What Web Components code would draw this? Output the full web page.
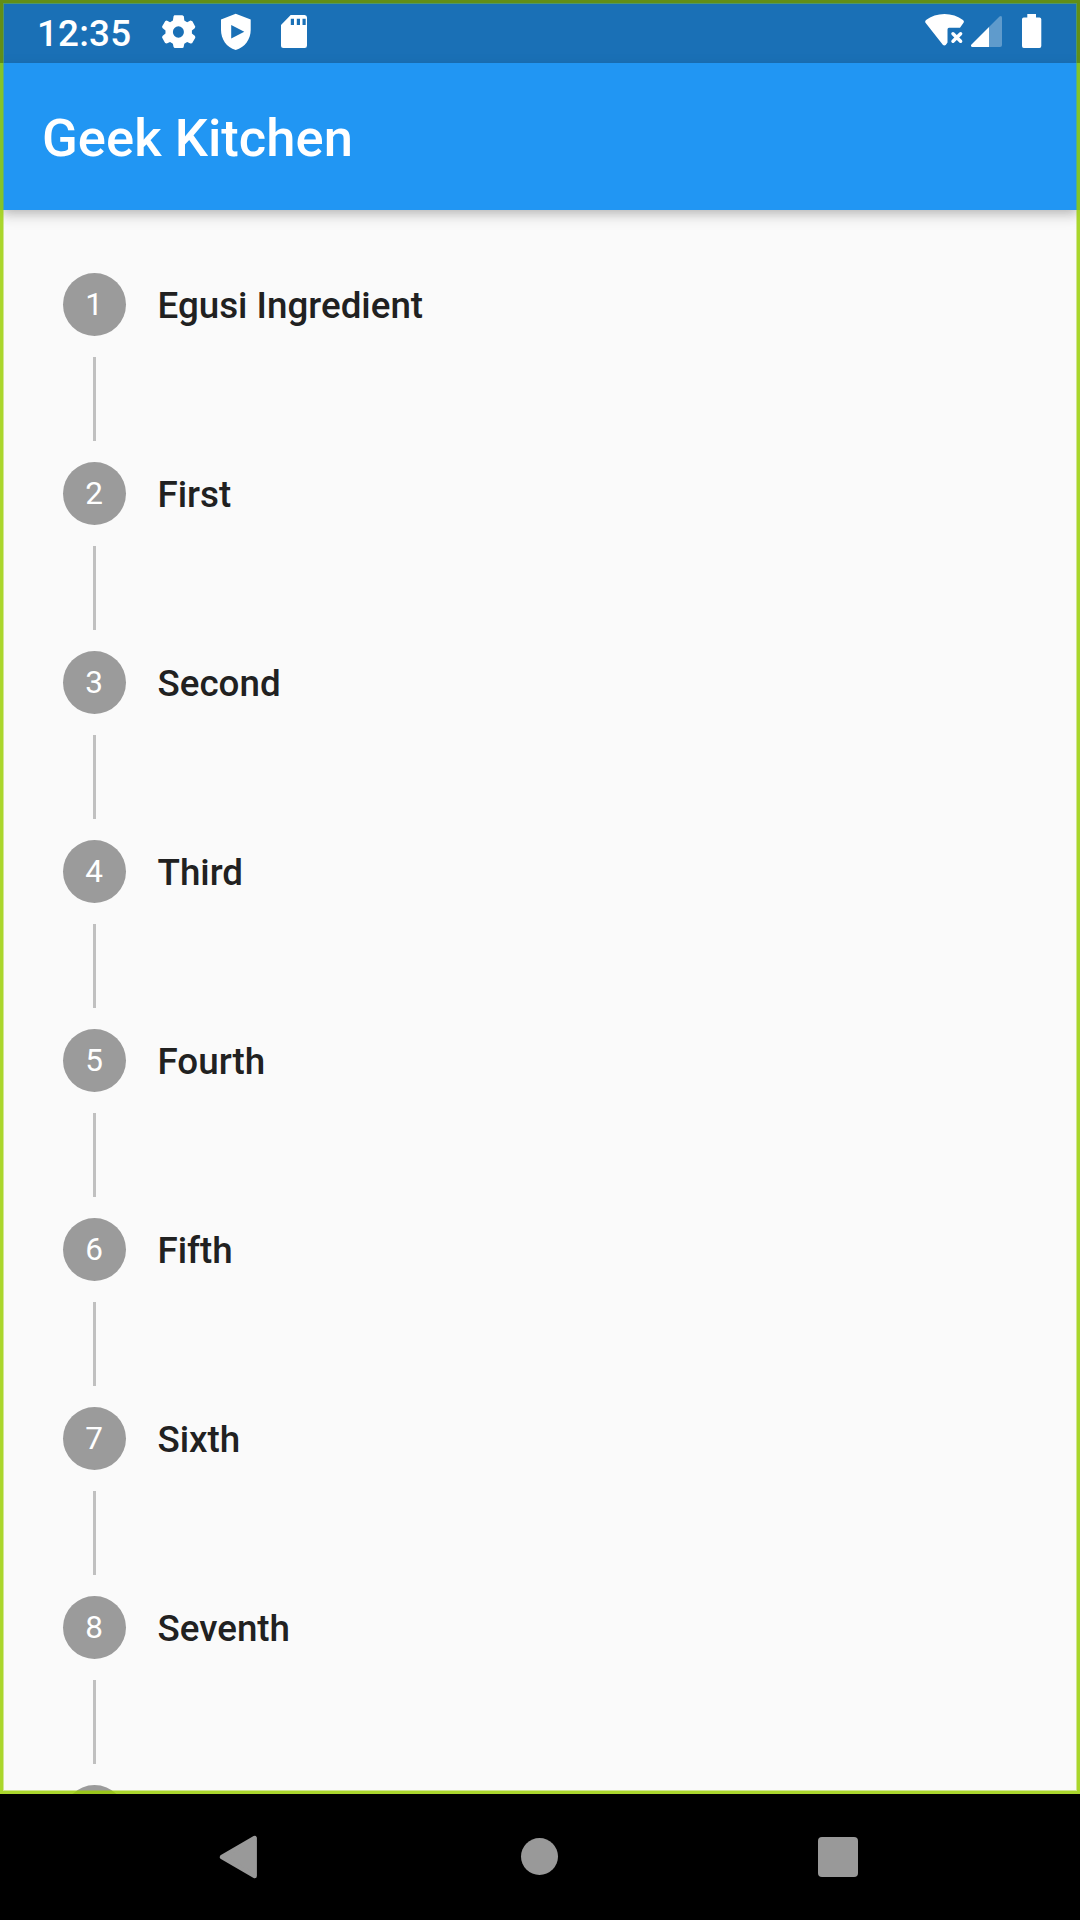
<!DOCTYPE html>
<html lang="en">
<head>
<meta charset="utf-8">
<title>Geek Kitchen</title>
<style>
html,body{margin:0;height:100%;overflow:hidden;background:#000}
body{font-family:Roboto,sans-serif}
</style>
</head>
<body>
<kitchen-screen></kitchen-screen>
<script>
class Base extends HTMLElement{
  constructor(){super();this.attachShadow({mode:'open'}).innerHTML=this.view()}
}
customElements.define('status-bar',class extends Base{
  view(){return `<style>
  :host{display:flex;box-sizing:border-box;height:63px;padding:0 37px 0 37px;background:#1a70b6;color:#fff;justify-content:space-between;align-items:center}
  .l,.r{display:flex;align-items:flex-start;height:63px}
  time{font-size:36.75px;font-weight:500;line-height:67px;width:119px;letter-spacing:.2px}
  svg{display:block;fill:#fff}
  .l svg{margin-top:11px;width:42px;height:42px;margin-right:16px}
  .r svg{height:63px}
  </style>
  <div class="l"><time>12:35</time>
   <svg viewBox="0 0 42 42"><path fill-rule="evenodd" d="M17.5 4H26L27.5 5L28 9.3L31 11L34.5 9.3L36.5 10L39.6 15.6L39 17.2L36 19.3V22.3L39.3 25L39.6 26.7L36.2 32.3L34.5 32.6L31 31L28 32.8L27.2 36.6L26 37H17.7L16.7 36L16 32.8L13 31L9.5 32.5L7.8 32L4.6 26.5L5 25L8.2 22.3V19.3L5 16.8L4.6 15.3L8 9.8L9.5 9.2L13 11L16 9.3L16.7 5ZM21.8 15.1a5.8 5.8 0 1 0 0 11.6a5.8 5.8 0 1 0 0-11.6Z" transform="translate(1.7 .3) scale(.95 .99)"/></svg>
   <svg viewBox="0 0 42 42"><path fill-rule="evenodd" d="M21.7 2.7L36.7 8.5V19C36.7 28 31 36.5 21.7 39C12.4 36.5 7 28 7 19V8.5ZM17.2 14V27.5L30.3 20.8Z"/></svg>
   <svg viewBox="0 0 42 42"><path fill-rule="evenodd" d="M18.7 4H32.6Q35 4 35 6.5V34.5Q35 37 32.6 37H11.5Q9 37 9 34.5V14ZM18.8 7.7V14H22V7.7ZM24.8 7.7V14H28V7.7ZM30.5 7.7V14H33.7V7.7Z"/></svg>
  </div>
  <div class="r"><svg width="121" viewBox="922 0 121 63">
   <path d="M925.3 22.5Q924.7 21 926 20C936 12 953 12 963 20Q964.5 21 963.7 22.5L960 27.8H949Q947.5 27.8 947.5 29.5V42.5Q945.5 46.5 943 45Z"/>
   <path d="M953 33.8L960.6 41.2M960.6 33.8L953 41.2" fill="none" stroke="#fff" stroke-width="3.5" stroke-linecap="round"/>
   <path d="M989 27V47H972Q970.5 46.5 971 45Z"/><path opacity=".3" d="M989 27L999.5 16.5Q1002 15 1002 18V45Q1002 47 1000 47H989Z"/>
   <path d="M1027.3 14H1036V17.5H1039.5Q1041.3 17.5 1041.3 19.3V46Q1041.3 48 1039.5 48H1023.8Q1022 48 1022 46V19.3Q1022 17.5 1023.8 17.5H1027.3Z"/>
  </svg></div>`}
});
customElements.define('app-bar',class extends Base{
  view(){return `<style>
  :host{display:flex;box-sizing:border-box;height:147px;padding:0 42px;align-items:center;background:#2196f3;color:#fff;z-index:1;
   box-shadow:0 5px 10px -3px rgba(0,0,0,.2),0 10px 13px rgba(0,0,0,.06),0 3px 16px rgba(0,0,0,.06)}
  h1{margin:0;font-size:52.5px;font-weight:500;line-height:62px;white-space:nowrap;padding-top:2px;letter-spacing:.05px}
  </style><h1><slot></slot></h1>`}
});
customElements.define('recipe-step',class extends Base{
  view(){return `<style>
  :host{display:block;height:189px;flex:none}
  .head{display:flex;align-items:center;gap:31.5px;height:63px}
  .num{box-sizing:border-box;width:63px;height:63px;padding-right:1px;border-radius:50%;background:#9b9b9b;color:#fff;display:flex;align-items:center;justify-content:center;font-size:31.5px}
  .title{font-size:36.75px;font-weight:500;color:#212121;padding-top:2px}
  .line{width:3px;height:84px;margin:21px 0 0 30px;background:#c0c0c0}
  </style><div class="head"><div class="num"><slot name="n"></slot></div><div class="title"><slot></slot></div></div><div class="line"></div>`}
});
customElements.define('nav-bar',class extends Base{
  view(){return `<style>
  :host{display:block;height:126px;background:#000}svg{display:block}
  </style><svg width="1080" height="126" viewBox="0 0 1080 126" fill="#999">
  <path d="M222 63L254.7 44V82Z" stroke="#999" stroke-width="4.4" stroke-linejoin="round"/>
  <circle cx="539.5" cy="62.5" r="18.5"/><rect x="818" y="43" width="40" height="40" rx="4"/></svg>`}
});
customElements.define('kitchen-screen',class extends Base{
  view(){const s=['Egusi Ingredient','First','Second','Third','Fourth','Fifth','Sixth','Seventh'];
  return `<style>
  :host{display:flex;flex-direction:column;width:1080px;height:1920px}
  .app{position:relative;display:flex;flex-direction:column;height:1794px;overflow:hidden;background:#fafafa}
  .app>*{flex:none}
  main{display:flex;flex-direction:column;padding:63px 63px 0}
  .edge{position:absolute;inset:0;border:3px solid rgba(153,206,0,.825);box-shadow:inset 0 0 0 1px rgba(153,206,0,.42);pointer-events:none;z-index:2}
  .shade{position:absolute;inset:0 0 auto;height:63px;border:3px solid rgba(0,0,0,.25);border-bottom:0;box-sizing:border-box;z-index:3}
  </style><div class="app"><status-bar></status-bar><app-bar>Geek Kitchen</app-bar>
  <main>${s.map((t,i)=>`<recipe-step><span slot="n">${i+1}</span>${t}</recipe-step>`).join('')}<recipe-step></recipe-step></main>
  <div class="edge"></div><div class="shade"></div></div><nav-bar></nav-bar>`}
});
</script>
</body>
</html>
